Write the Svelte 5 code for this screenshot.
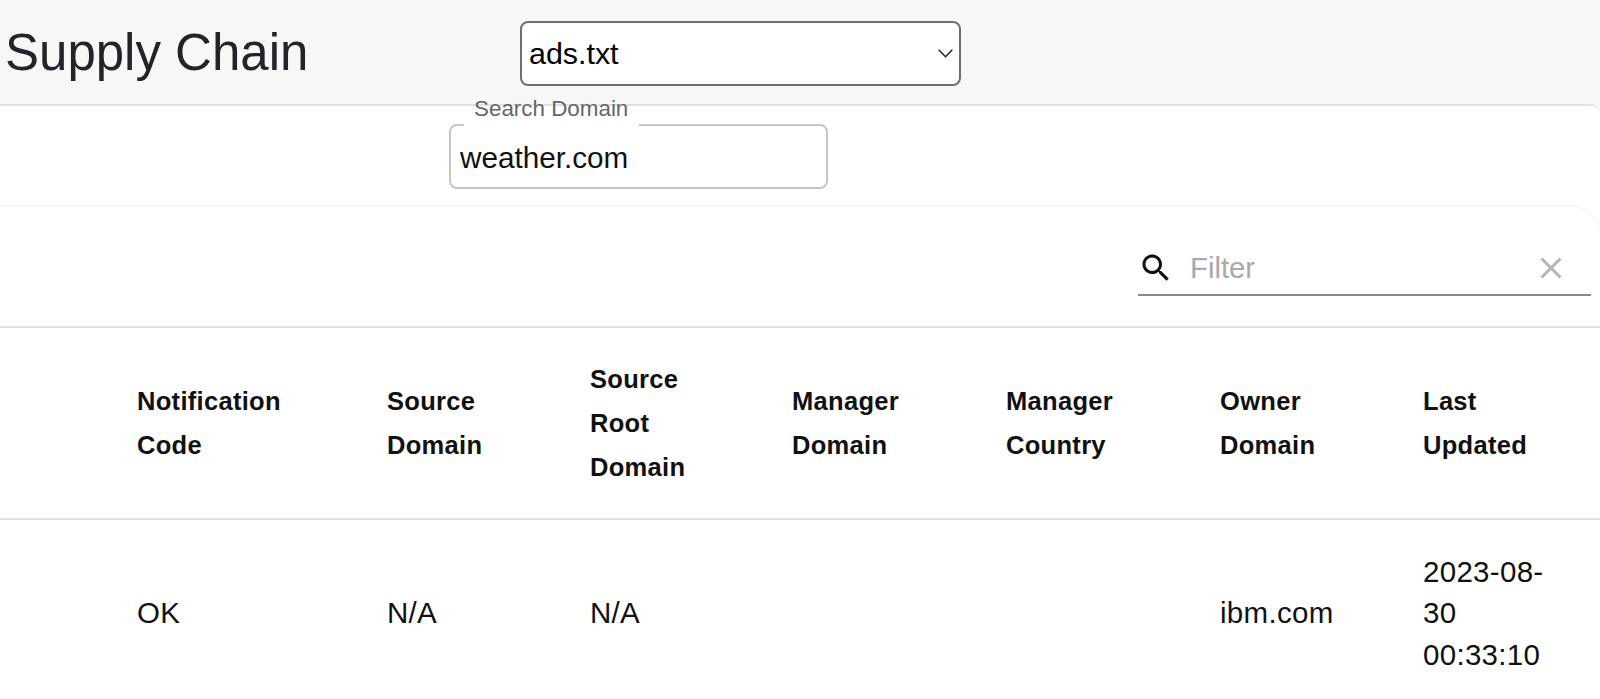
<script>
	const columns = [
		{ label: 'Notification Code', value: 'OK', width: 250 },
		{ label: 'Source Domain', value: 'N/A', width: 203 },
		{ label: 'Source Root Domain', value: 'N/A', width: 202 },
		{ label: 'Manager Domain', value: '', width: 214 },
		{ label: 'Manager Country', value: '', width: 214 },
		{ label: 'Owner Domain', value: 'ibm.com', width: 203 },
		{ label: 'Last Updated', value: '2023-08-30 00:33:10', width: 177 }
	];
</script>

<div class="page">
	<header class="top">
		<h1>Supply Chain</h1>
		<div class="select-wrap">
			<select aria-label="File type">
				<option>ads.txt</option>
				<option>sellers.json</option>
			</select>
			<svg class="chevron" viewBox="0 0 15 9" aria-hidden="true">
				<path d="M0.7 0.7 7.5 7.7 14.3 0.7" />
			</svg>
		</div>
	</header>

	<section class="panel">
		<div class="search-row">
			<div class="field">
				<span class="field-label">Search Domain</span>
				<input type="text" value="weather.com" aria-label="Search Domain" />
			</div>
		</div>

		<div class="grid-card">
			<div class="toolbar">
				<div class="filter">
					<svg class="icon-search" viewBox="0 0 24 24" aria-hidden="true">
						<path d="M15.5 14h-.79l-.28-.27C15.41 12.59 16 11.11 16 9.5 16 5.91 13.09 3 9.5 3S3 5.91 3 9.5 5.91 16 9.5 16c1.61 0 3.09-.59 4.23-1.57l.27.28v.79l5 4.99L20.49 19l-4.99-5zm-6 0C7.01 14 5 11.99 5 9.5S7.01 5 9.5 5 14 7.01 14 9.5 11.99 14 9.5 14z" />
					</svg>
					<input type="text" placeholder="Filter" aria-label="Filter" />
					<svg class="icon-clear" viewBox="0 0 24 24" aria-hidden="true">
						<path d="M19 6.41 17.59 5 12 10.59 6.41 5 5 6.41 10.59 12 5 17.59 6.41 19 12 13.41 17.59 19 19 17.59 13.41 12z" />
					</svg>
				</div>
			</div>

			<table>
				<colgroup>
					<col class="offscreen" />
					{#each columns as col}
						<col style="width: {col.width}px" />
					{/each}
				</colgroup>
				<thead>
					<tr>
						<th></th>
						{#each columns as col}
							<th>{col.label}</th>
						{/each}
					</tr>
				</thead>
				<tbody>
					<tr>
						<td></td>
						{#each columns as col}
							<td>{col.value}</td>
						{/each}
					</tr>
				</tbody>
			</table>
		</div>
	</section>
</div>

<style>
	:global(body) {
		margin: 0;
		overflow: hidden;
		background: #fff;
	}

	.page {
		height: 699px;
		overflow: hidden;
		font-family: "Liberation Sans", Arial, sans-serif;
		color: #111;
		background: #f7f7f7;
	}

	.top {
		display: flex;
		align-items: center;
		height: 104px;
		background: #f7f7f7;
		padding: 2px 0 0 5px;
		box-sizing: border-box;
	}

	h1 {
		margin: 0;
		width: 515px;
		font-size: 51px;
		font-weight: 400;
		color: #212529;
		line-height: 1.2;
	}

	.select-wrap {
		position: relative;
		width: 441px;
		height: 65px;
	}

	select {
		appearance: none;
		width: 100%;
		height: 100%;
		box-sizing: border-box;
		border: 2px solid #6f6f6f;
		border-radius: 8px;
		background: #fff;
		padding: 0 0 0 7px;
		font-family: inherit;
		font-size: 30.4px;
		color: #000;
	}

	.chevron {
		position: absolute;
		right: 8px;
		top: 28px;
		width: 15px;
		height: 9px;
		fill: none;
		stroke: #222;
		stroke-width: 1.5;
		pointer-events: none;
	}

	.panel {
		background: #fff;
		border-top: 2px solid #e2e2e2;
		border-top-right-radius: 10px;
	}

	.search-row {
		padding: 18px 0 18px 449px;
	}

	.field {
		position: relative;
		width: 379px;
		height: 65px;
	}

	/* gap in the outline behind the floating label */
	.field::before {
		content: '';
		position: absolute;
		left: 15px;
		top: -1px;
		width: 175px;
		height: 4px;
		background: #fff;
	}

	.field-label {
		position: absolute;
		left: 25px;
		top: -27px;
		font-size: 22.4px;
		line-height: 24px;
		color: #666;
	}

	.field input {
		width: 100%;
		height: 100%;
		box-sizing: border-box;
		border: 2px solid #c6c6c6;
		border-radius: 8px;
		padding: 2px 9px 0;
		font-family: inherit;
		font-size: 29.7px;
		color: #111;
		background: transparent;
		outline: none;
	}

	.grid-card {
		border-top-right-radius: 30px;
		box-shadow: 0 -1px 3px rgba(0, 0, 0, 0.07);
	}

	.toolbar {
		display: flex;
		justify-content: flex-end;
		height: 121px;
		box-sizing: border-box;
		padding: 41px 9px 0 0;
		border-bottom: 2px solid #e0e0e0;
	}

	.filter {
		display: flex;
		align-items: center;
		width: 453px;
		height: 48px;
		box-sizing: border-box;
		padding-bottom: 7px;
		border-bottom: 2px solid #8a8a8a;
	}

	.icon-search {
		width: 36px;
		height: 36px;
		fill: #111;
		flex: none;
	}

	.filter input {
		flex: 1;
		min-width: 0;
		border: none;
		outline: none;
		background: transparent;
		padding: 0 0 0 16px;
		font-family: inherit;
		font-size: 29.3px;
		color: #111;
	}

	.filter input::placeholder {
		color: #a9a9a9;
		opacity: 1;
	}

	.icon-clear {
		width: 36px;
		height: 36px;
		margin-right: 22px;
		fill: #b5b5b5;
		flex: none;
	}

	table {
		width: 1600px;
		table-layout: fixed;
		border-collapse: collapse;
	}

	.offscreen {
		width: 137px;
	}

	th,
	td {
		padding: 0 60px 0 0;
		text-align: left;
		vertical-align: middle;
		letter-spacing: 0.3px;
	}

	th:last-child,
	td:last-child {
		padding-right: 30px;
	}

	th {
		height: 190px;
		border-bottom: 2px solid #e0e0e0;
		font-size: 25.5px;
		line-height: 44px;
		font-weight: 700;
		color: #111;
	}

	td {
		height: 186px;
		font-size: 29.5px;
		line-height: 41.5px;
		color: #111;
	}
</style>
